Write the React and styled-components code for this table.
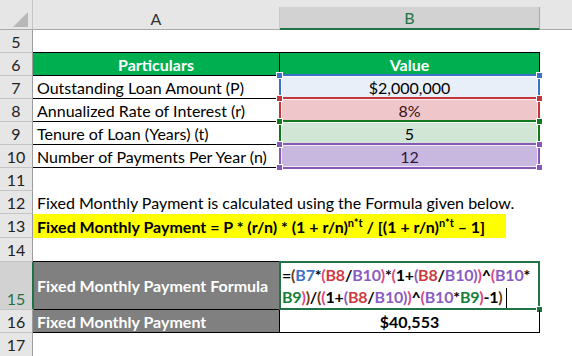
import React from "react";
import styled, { createGlobalStyle } from "styled-components";

const Global = createGlobalStyle`
  html, body { margin: 0; padding: 0; background: #fff; }
  #root { width: 572px; height: 356px; }
`;

const FONT = `"Lato", "Open Sans", sans-serif`;

const Sheet = styled.div`
  width: 572px;
  height: 356px;
  overflow: hidden;
  background: #fff;
  font-family: ${FONT};
  font-size: 16px;
  color: #000;
`;

const Row = styled.div`
  display: grid;
  grid-template-columns: 33px 247px 260px 1fr;
  height: ${(p) => p.h}px;
`;

const HeaderRow = styled(Row)`
  background: #e6e6e6;
  border-bottom: 1px solid #ababab;
  box-sizing: border-box;
`;

const Corner = styled.div`
  display: flex;
  align-items: flex-end;
  justify-content: flex-end;
  padding: 0 4px 2px 0;
  border-right: 1px solid #c6c6c6;
`;

const ColHead = styled.div`
  margin-top: 7px;
  display: flex;
  align-items: center;
  justify-content: center;
  font-size: 16px;
  color: ${(p) => (p.sel ? "#217346" : "#333")};
  background: ${(p) => (p.sel ? "#d2d2d2" : "#e6e6e6")};
  border-right: 1px solid ${(p) => (p.sel ? "#a9a9a9" : "#c8c8c8")};
  border-bottom: ${(p) => (p.sel ? "2px solid #217346" : "none")};
  margin-bottom: ${(p) => (p.sel ? "-1px" : "0")};
`;

const RowHead = styled.div`
  box-sizing: border-box;
  display: flex;
  justify-content: center;
  align-items: ${(p) => (p.bottom ? "flex-end" : "center")};
  padding-bottom: ${(p) => (p.bottom ? "1px" : "0")};
  background: ${(p) => (p.sel ? "#d2d2d2" : "#e6e6e6")};
  color: ${(p) => (p.sel ? "#217346" : "#222")};
  border-bottom: 1px solid #c4c4c4;
  border-right: ${(p) => (p.sel ? "2px solid #217346" : "1px solid #9c9c9c")};
  margin-right: ${(p) => (p.sel ? "-1px" : "0")};
  position: relative;
  z-index: ${(p) => (p.sel ? 1 : 0)};
  font-size: 16px;
`;

const Cell = styled.div`
  box-sizing: border-box;
  position: relative;
  display: flex;
  align-items: center;
  justify-content: ${(p) =>
    p.align === "center" ? "center" : p.align === "right" ? "flex-end" : "flex-start"};
  padding: 0 4px;
  background: ${(p) => p.bg || "transparent"};
  color: ${(p) => p.color || "#000"};
  font-weight: ${(p) => (p.bold ? 700 : 400)};
  border-bottom: ${(p) => (p.bb ? "1px solid #000" : "none")};
  border-right: ${(p) => (p.br ? "1px solid #000" : "none")};
  grid-column: ${(p) => (p.span ? `span ${p.span}` : "auto")};
  white-space: nowrap;
`;

const Highlight = styled.div`
  position: absolute;
  left: -1px;
  top: -2px;
  right: -1px;
  bottom: -2px;
  border: 2px solid ${(p) => p.c};
  box-shadow: inset 0 0 0 1px rgba(255, 255, 255, 0.7);
  pointer-events: none;
`;

const Handle = styled.span`
  position: absolute;
  width: 5px;
  height: 5px;
  background: ${(p) => p.c};
  border: 1px solid #fff;
  ${(p) => (p.l ? "left: -4px;" : "right: -4px;")}
  ${(p) => (p.t ? "top: -4px;" : "bottom: -4px;")}
`;

const YellowBand = styled.div`
  align-self: stretch;
  display: flex;
  align-items: center;
  width: 469px;
  padding-left: 4px;
  background: #ffff00;
  font-weight: 700;
  margin-left: -4px;
`;

const Sup = styled.sup`
  font-size: 11px;
  line-height: 0;
  vertical-align: 6px;
`;

const Active = styled.div`
  position: absolute;
  left: -1px;
  top: -1px;
  right: -1px;
  bottom: -1px;
  border: 2px solid #217346;
  pointer-events: none;
`;

const FillHandle = styled.span`
  position: absolute;
  right: -4px;
  bottom: -4px;
  width: 5px;
  height: 5px;
  background: #217346;
  border: 1px solid #fff;
`;

const FormulaText = styled.div`
  align-self: stretch;
  padding: 2px 0 0 0;
  margin-left: -2px;
  font-weight: 700;
  line-height: 22px;
  letter-spacing: -0.2px;
  white-space: nowrap;
`;

const Tok = styled.span`
  color: ${(p) => p.c};
`;

const Caret = styled.span`
  display: inline-block;
  width: 1px;
  height: 20px;
  background: #000;
  vertical-align: -5px;
  margin-left: 3px;
`;

const ranges = [
  { row: 7, label: "Outstanding Loan Amount (P)", value: "$2,000,000", fill: "#e9eff8", c: "#3c6fc8", color: "#000" },
  { row: 8, label: "Annualized Rate of Interest (r)", value: "8%", fill: "#efc7cb", c: "#c4363c", color: "#3a1010" },
  { row: 9, label: "Tenure of Loan (Years) (t)", value: "5", fill: "#d2e6d5", c: "#12791f", color: "#000" },
  { row: 10, label: "Number of Payments Per Year (n)", value: "12", fill: "#c8b8e0", c: "#8658b8", color: "#2a1a40" },
];

const K = "#000";
const BL = "#3d70c9";
const RD = "#cd3a44";
const PU = "#8a5bc2";
const GR = "#16803a";
const PK = "#e0457d";
const BR = "#6b3a10";

const line1 = [
  ["=", K], ["(", BR], ["B7", BL], ["*", K], ["(", PK], ["B8", RD], ["/", K], ["B10", PU], [")", PK],
  ["*", K], ["(", PK], ["1+", K], ["(", PU], ["B8", RD], ["/", K], ["B10", PU], [")", PU], [")", PK],
  ["^", K], ["(", PK], ["B10", PU], ["*", K],
];
const line2 = [
  ["B9", GR], [")", PK], [")", BR], ["/", K], ["(", BR], ["(", PK], ["1+", K], ["(", PU], ["B8", RD],
  ["/", K], ["B10", PU], [")", PU], [")", PK], ["^", K], ["(", PK], ["B10", PU], ["*", K], ["B9", GR],
  [")", PK], ["-1", K], [")", BR],
];

function CornerIcon() {
  return (
    <svg width="15" height="15" viewBox="0 0 15 15">
      <polygon points="15,0 15,15 0,15" fill="#b8b8b8" />
    </svg>
  );
}

export default function App() {
  return (
    <>
      <Global />
      <Sheet>
        <HeaderRow h={30}>
          <Corner>
            <CornerIcon />
          </Corner>
          <ColHead>A</ColHead>
          <ColHead sel>B</ColHead>
          <div />
        </HeaderRow>

        <Row h={23}>
          <RowHead>5</RowHead>
          <Cell bb />
          <Cell bb />
          <div />
        </Row>

        <Row h={23}>
          <RowHead>6</RowHead>
          <Cell bg="#00b050" color="#fff" bold align="center" bb br>
            Particulars
          </Cell>
          <Cell bg="#00b050" color="#fff" bold align="center" bb br>
            Value
          </Cell>
          <div />
        </Row>

        {ranges.map((r) => (
          <Row h={23} key={r.row}>
            <RowHead>{r.row}</RowHead>
            <Cell bb br>
              {r.label}
            </Cell>
            <Cell bg={r.fill} color={r.color} align="center" bb br>
              {r.value}
              <Highlight c={r.c} />
              <Handle c={r.c} l t />
              <Handle c={r.c} t />
              <Handle c={r.c} l />
              <Handle c={r.c} />
            </Cell>
            <div />
          </Row>
        ))}

        <Row h={23}>
          <RowHead>11</RowHead>
          <Cell />
          <Cell />
          <div />
        </Row>

        <Row h={23}>
          <RowHead>12</RowHead>
          <Cell span={2}>Fixed Monthly Payment is calculated using the Formula given below.</Cell>
          <div />
        </Row>

        <Row h={24}>
          <RowHead>13</RowHead>
          <Cell span={2}>
            <YellowBand>
              <span>
                Fixed Monthly Payment = P * (r/n) * (1 + r/n)<Sup>n*t</Sup> / [(1 + r/n)
                <Sup>n*t</Sup> – 1]
              </span>
            </YellowBand>
          </Cell>
          <div />
        </Row>

        <Row h={24}>
          <RowHead>14</RowHead>
          <Cell bb />
          <Cell bb />
          <div />
        </Row>

        <Row h={48}>
          <RowHead sel bottom>
            15
          </RowHead>
          <Cell bg="#808080" color="#fff" bold bb br>
            Fixed Monthly Payment Formula
          </Cell>
          <Cell bb br>
            <FormulaText>
              {line1.map(([t, c], i) => (
                <Tok c={c} key={"a" + i}>
                  {t}
                </Tok>
              ))}
              <br />
              {line2.map(([t, c], i) => (
                <Tok c={c} key={"b" + i}>
                  {t}
                </Tok>
              ))}
              <Caret />
            </FormulaText>
            <Active />
            <FillHandle />
          </Cell>
          <div />
        </Row>

        <Row h={23}>
          <RowHead>16</RowHead>
          <Cell bg="#808080" color="#fff" bold bb br>
            Fixed Monthly Payment
          </Cell>
          <Cell bold align="center" bb br>
            $40,553
          </Cell>
          <div />
        </Row>

        <Row h={24}>
          <RowHead>17</RowHead>
          <Cell />
          <Cell />
          <div />
        </Row>
      </Sheet>
    </>
  );
}
